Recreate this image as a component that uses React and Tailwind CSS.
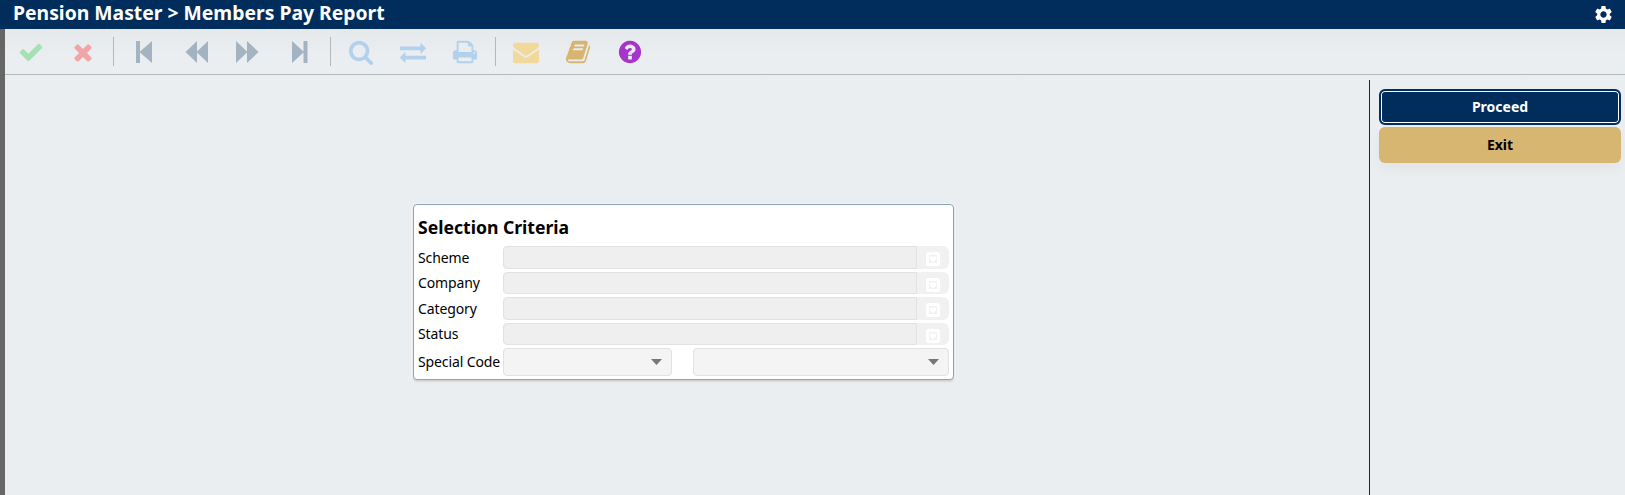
import { MdSettings } from "react-icons/md";

const paths = {
  check: "M1671 566q0 40-28 68l-724 724-136 136q-28 28-68 28t-68-28l-136-136-362-362q-28-28-28-68t28-68l136-136q28-28 68-28t68 28l294 295 656-657q28-28 68-28t68 28l136 136q28 28 28 68z",
  times: "M1490 1322q0 40-28 68l-136 136q-28 28-68 28t-68-28l-294-294-294 294q-28 28-68 28t-68-28l-136-136q-28-28-28-68t28-68l294-294-294-294q-28-28-28-68t28-68l136-136q28-28 68-28t68 28l294 294 294-294q28-28 68-28t68 28l136 136q28 28 28 68t-28 68l-294 294 294 294q28 28 28 68z",
  search: "M1216 832q0-185-131.5-316.5t-316.5-131.5-316.5 131.5-131.5 316.5 131.5 316.5 316.5 131.5 316.5-131.5 131.5-316.5zm512 832q0 52-38 90t-90 38q-54 0-90-38l-343-342q-179 124-399 124-143 0-273.5-55.5t-225-150-150-225-55.5-273.5 55.5-273.5 150-225 225-150 273.5-55.5 273.5 55.5 225 150 150 225 55.5 273.5q0 220-124 399l343 343q37 37 37 90z",
  exchange: "M1792 1184v192q0 13-9.5 22.5t-22.5 9.5h-1376v192q0 13-9.5 22.5t-22.5 9.5q-12 0-24-10l-319-320q-9-9-9-22 0-14 9-23l320-320q9-9 23-9 13 0 22.5 9.5t9.5 22.5v192h1376q13 0 22.5 9.5t9.5 22.5zm0-544q0 14-9 23l-320 320q-9 9-23 9-13 0-22.5-9.5t-9.5-22.5v-192h-1376q-13 0-22.5-9.5t-9.5-22.5v-192q0-13 9.5-22.5t22.5-9.5h1376v-192q0-14 9-23t23-9q12 0 24 10l319 319q9 9 9 23z",
  print: "M448 1536h896v-256h-896v256zm0-640h896v-384h-160q-40 0-68-28t-28-68v-160h-640v640zm1152 64q0-26-19-45t-45-19-45 19-19 45 19 45 45 19 45-19 19-45zm128 0v416q0 13-9.5 22.5t-22.5 9.5h-224v160q0 40-28 68t-68 28h-960q-40 0-68-28t-28-68v-160h-224q-13 0-22.5-9.5t-9.5-22.5v-416q0-79 56.5-135.5t135.5-56.5h64v-544q0-40 28-68t68-28h672q40 0 88 20t76 48l152 152q28 28 48 76t20 88v256h64q79 0 135.5 56.5t56.5 135.5z",
  envelope: "M1792 710v794q0 66-47 113t-113 47h-1472q-66 0-113-47t-47-113v-794q44 49 101 87 362 246 497 345 57 42 92.5 65.5t94.5 48 110 24.5h2q51 0 110-24.5t94.5-48 92.5-65.5q170-123 498-345 57-39 100-87zm0-294q0 79-49 151t-122 123q-376 261-468 325-10 7-42.5 31t-54 38.5-52 32.5-57.5 27-50 9h-2q-23 0-50-9t-57.5-27-52-32.5-54-38.5-42.5-31q-91-64-262-182.5t-205-142.5q-62-42-117-115.5t-55-136.5q0-78 41.5-130t118.5-52h1472q65 0 112.5 47t47.5 113z",
  book: "M1703 478q40 57 18 129l-275 906q-19 64-76.5 107.5t-122.5 43.5h-923q-77 0-148.5-53.5t-99.5-131.5q-24-67-2-127 0-4 3-27t4-37q1-8-3-21.5t-3-19.5q2-11 8-21t16.5-23.5 16.5-23.5q23-38 45-91.5t30-91.5q3-10 .5-30t-.5-28q3-11 17-28t17-23q21-36 42-92t25-90q1-9-2.5-32t.5-28q4-13 22-30.5t22-22.5q19-26 42.5-84.5t27.5-96.5q1-8-3-25.5t-2-26.5q2-8 9-18t18-23 17-21q8-12 16.5-30.5t15-35 16-36 19.5-32 26.5-23.5 36-11.5 47.5 5.5l-1 3q38-9 51-9h761q74 0 114 56t18 130l-274 906q-36 119-71.5 153.5t-128.5 34.5h-869q-27 0-38 15-11 16-1 43 24 70 144 70h923q29 0 56-15.5t35-41.5l300-987q7-22 5-57 38 15 59 43zm-1064 2q-4 13 2 22.5t20 9.5h608q13 0 25.5-9.5t16.5-22.5l21-64q4-13-2-22.5t-20-9.5h-608q-13 0-25.5 9.5t-16.5 22.5zm-83 256q-4 13 2 22.5t20 9.5h608q13 0 25.5-9.5t16.5-22.5l21-64q4-13-2-22.5t-20-9.5h-608q-13 0-25.5 9.5t-16.5 22.5z",
  help: "M1024 1376v-192q0-14-9-23t-23-9h-192q-14 0-23 9t-9 23v192q0 14 9 23t23 9h192q14 0 23-9t9-23zm256-672q0-88-55.5-163t-138.5-116-170-41q-243 0-371 213-15 24 8 42l132 100q7 6 19 6 16 0 25-12 53-68 86-92 34-24 86-24 48 0 85.5 26t37.5 59q0 38-20 61t-68 45q-63 28-115.5 86.5t-52.5 125.5v36q0 14 9 23t23 9h192q14 0 23-9t9-23q0-19 21.5-49.5t54.5-49.5q32-18 49-28.5t46-35 44.5-48 28-60.5 12.5-81zm384 192q0 209-103 385.5t-279.5 279.5-385.5 103-385.5-103-279.5-279.5-103-385.5 103-385.5 279.5-279.5 385.5-103 385.5 103 279.5 279.5 103 385.5z",
};

function Tool({ name, label, className }) {
  return (
    <button aria-label={label} className={`flex h-[46px] w-[52px] items-center justify-center ${className}`}>
      <svg viewBox="0 0 1792 1792" className="size-[26px]" fill="currentColor">
        <path d={paths[name]} />
      </svg>
    </button>
  );
}

function Nav({ d, label }) {
  return (
    <button aria-label={label} className="flex h-[46px] w-[52px] items-center justify-center text-[#a4b3c2]">
      <svg viewBox="0 0 24 24" className="size-6" fill="currentColor">
        <path d={d} />
      </svg>
    </button>
  );
}

function Divider() {
  return <div className="mx-1 h-[29px] w-px shrink-0 bg-[#b3b8bb]" />;
}

function LookupField({ label, className }) {
  return (
    <div className={`flex ${className}`}>
      <label className="flex w-[85px] shrink-0 items-center whitespace-nowrap">{label}</label>
      <div className="flex-1 rounded-l-[4px] border border-[#e2e2e2] bg-[#efefef]" />
      <div className="flex w-8 items-center justify-center rounded-r-[6px] bg-[#f1f1f1]">
        <svg viewBox="0 0 14 14" className="mt-[3px] size-3.5">
          <rect width="14" height="14" rx="2.5" fill="#fff" />
          <path d="M3 3h8v8H3z" fill="#f1f1f1" />
          <path d="M3.8 4.5h6.4v2.8L7 10.5 3.8 7.3z" fill="#fff" />
        </svg>
      </div>
    </div>
  );
}

function Select({ className }) {
  return (
    <div className={`flex h-7 items-center justify-end rounded-[4px] border border-[#e2e2e2] bg-[#f4f4f4] pr-[9px] ${className}`}>
      <svg viewBox="0 0 11 6" className="h-1.5 w-[11px]">
        <path d="M0 0h11L5.5 6z" fill="#777" />
      </svg>
    </div>
  );
}

export default function App() {
  return (
    <div className="flex h-[495px] w-[1625px] flex-col overflow-hidden bg-[#eaeef1] font-['Noto_Sans',sans-serif] text-black">
      <header className="flex h-[29px] shrink-0 items-center justify-between bg-[#002d5b] pr-[11px] pl-[13px] text-white">
        <h1 className="-mt-[3px] text-[19.35px] leading-none font-bold whitespace-nowrap">Pension Master &gt; Members Pay Report</h1>
        <MdSettings className="-mt-px size-[21px]" />
      </header>
      <div className="flex min-h-0 flex-1">
        <div className="w-[5px] shrink-0 bg-[#666]" />
        <div className="flex min-w-0 flex-1 flex-col">
          <div className="flex h-[46px] shrink-0 items-center border-b border-[#b3b8bb] bg-linear-to-b from-[#e6e9ec] to-[#eaeef1] to-60%">
            <Tool name="check" label="Confirm" className="text-[#a5e2b3]" />
            <Tool name="times" label="Cancel" className="text-[#f0a5a6]" />
            <Divider />
            <Nav label="First" d="M4 1h4v10.5L20 1v22L8 12.5V23H4z" />
            <Nav label="Previous" d="M13 1v22L1.5 12zM24 1v22L12.5 12z" />
            <Nav label="Next" d="M0 1v22l11.5-11zM11 1v22l11.5-11z" />
            <Nav label="Last" d="M4 1l11.5 10.5V1h4v22h-4V12.5L4 23z" />
            <Divider />
            <Tool name="search" label="Search" className="text-[#b1d1ed]" />
            <Tool name="exchange" label="Exchange" className="text-[#b1d1ed]" />
            <Tool name="print" label="Print" className="text-[#b1d1ed]" />
            <Divider />
            <Tool name="envelope" label="Mail" className="text-[#f1d99b]" />
            <Tool name="book" label="Manual" className="text-[#d7b570]" />
            <Tool name="help" label="Help" className="text-[#a636c9]" />
          </div>
          <div className="flex min-h-0 flex-1 pt-[5px]">
            <main className="min-w-0 flex-1 pt-[124px] pl-[408px]">
              <section className="h-[176px] w-[541px] rounded-[4px] border border-[#8ba4b6] bg-white px-1 pt-3 text-[14px] leading-none tracking-[-0.12px] shadow-[0_2px_2px_rgba(0,0,0,0.14),0_1px_0_2px_#f1f3f5]">
                <h2 className="-mt-px mb-[7px] h-[23px] text-[17.6px] leading-[23px] font-bold tracking-normal">Selection Criteria</h2>
                <LookupField label="Scheme" className="h-[23px]" />
                <LookupField label="Company" className="mt-[3px] h-[22px]" />
                <LookupField label="Category" className="mt-[3px] h-[23px]" />
                <LookupField label="Status" className="mt-[3px] h-[22px]" />
                <div className="mt-[3px] flex items-center">
                  <label className="w-[85px] whitespace-nowrap">Special Code</label>
                  <Select className="w-[169px]" />
                  <Select className="ml-[21px] w-[256px]" />
                </div>
              </section>
            </main>
            <aside className="flex w-[256px] shrink-0 flex-col gap-[2px] border-l border-[#002d5b] pt-[9px] pr-1 pl-[9px] text-[14px] font-bold">
              <button className="h-9 rounded-[6px] border-2 border-[#002d5b] bg-[#002d5b] pb-0.5 text-white ring-1 ring-white ring-inset">Proceed</button>
              <button className="h-9 rounded-[6px] bg-[#d7b672] pb-px shadow-[0_6px_12px_rgba(0,0,0,0.04)]">Exit</button>
            </aside>
          </div>
        </div>
      </div>
    </div>
  );
}
